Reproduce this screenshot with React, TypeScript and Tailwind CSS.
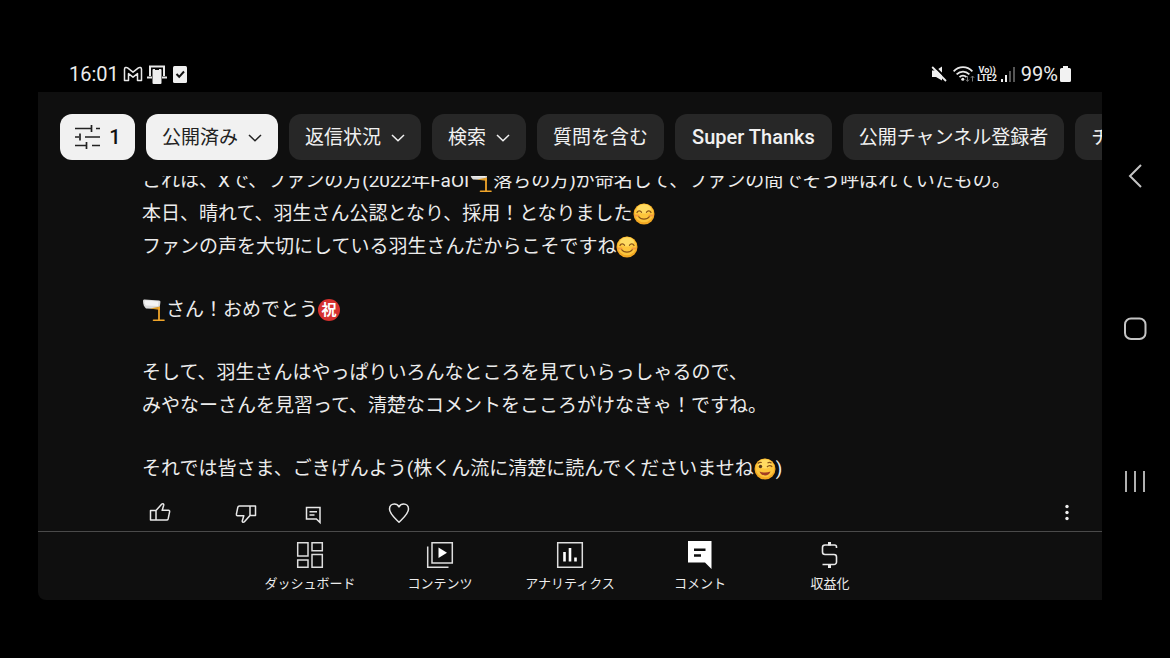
import React, { useState } from 'react'
import clsx from 'clsx'

type IconProps = {
    className?: string,
}

const MailIcon = () => (
    <svg className="h-4 w-5" viewBox="0 0 20 16" fill="none" stroke="#e8e8e8" strokeWidth="1.5" strokeLinejoin="round">
        <path d="M1.5 14.5V3.2C1.5 1.4 3.4 1 4.6 1.9L10 6.2l5.4-4.3c1.2-.9 3.1-.5 3.1 1.3v11.3h-4V7.6L10 11.2 5.5 7.6v6.9z" />
    </svg>
)

const CastIcon = () => (
    <svg className="h-[19px] w-5" viewBox="0 0 20 19" fill="none">
        <path d="M3 11V1.5h14V11" stroke="#e8e8e8" strokeWidth="2" />
        <path d="M0 12.5h5M15 12.5h5" stroke="#e8e8e8" strokeWidth="2" />
        <rect x="5.5" y="4" width="9" height="15" rx="1" fill="#f0f0f0" />
        <path d="M8 4.5h4" stroke="#111" strokeWidth="1" />
    </svg>
)

const TaskIcon = () => (
    <svg className="h-[17px] w-[14px]" viewBox="0 0 14 17" fill="none">
        <rect width="14" height="17" rx="1.5" fill="#efefef" />
        <path d="M3.5 8l2.7 2.8L11 5.5" stroke="#111" strokeWidth="2" />
    </svg>
)

const MuteIcon = () => (
    <svg className="h-4 w-4" viewBox="0 0 16 16" fill="none">
        <path d="M1 4.5h4L11 .5v14L5 11H1z" fill="#efefef" />
        <path d="M2.8 0L16 13" stroke="#000" strokeWidth="2" />
        <path d="M1.200 1L15 15" stroke="#efefef" strokeWidth="1.8" />
    </svg>
)

const WifiIcon = () => (
    <svg className="h-4 w-[22px]" viewBox="0 0 22 16" fill="none" stroke="#e8e8e8" strokeWidth="1.7">
        <path d="M.6 5.4C6-.2 14-.2 19.4 5.4M3.6 8.4c3.8-3.8 9-3.8 12.8 0M6.5 11.2c2-2.1 5-2.1 7 0" />
        <circle cx="9.8" cy="13.3" r="1.5" fill="#e8e8e8" stroke="none" />
        <path d="M14.5 10v5.4m-1.6-1.8l1.6 1.8 1.6-1.8M19.5 15.5V10m-1.6 1.8l1.6-1.8 1.6 1.8" stroke="#777" strokeWidth="1" />
    </svg>
)

const SignalIcon = () => (
    <svg className="h-[15px] w-[14px]" viewBox="0 0 14 15">
        <path d="M0 12h2v3H0zM4 8h2v7H4z" fill="#efefef" />
        <path d="M8 4h2v11H8zM12 0h2v15h-2z" fill="#555" />
    </svg>
)

const BatteryIcon = () => (
    <svg className="h-4 w-[11px]" viewBox="0 0 11 16">
        <path d="M3 0h5v2h1.5A1.5 1.5 0 0111 3.5v11A1.5 1.5 0 019.5 16h-8A1.5 1.5 0 010 14.5v-11A1.5 1.5 0 011.5 2H3z" fill="#f2f2f2" />
    </svg>
)

const TuneIcon = () => (
    <svg className="h-[26px] w-[27px]" viewBox="0 0 27 26" fill="none" stroke="#222" strokeWidth="1.7">
        <path d="M1 4.500h16M17.500 1v7M22 4.500h4M1 13h4M6 9.500v7M11 13h15M1 21.500h11M12.500 18v7M18 21.500h8" />
    </svg>
)

const ChevronIcon = () => (
    <svg className="h-2 w-[14px]" viewBox="0 0 14 8" fill="none" stroke="currentColor" strokeWidth="1.5">
        <path d="M1 1l6 5.800L13 1" />
    </svg>
)

const LikeIcon = ({ className }: IconProps) => (
    <svg className={className} viewBox="0 0 24 24" fill="none" stroke="#e8e8e8" strokeWidth="1.5" strokeLinejoin="round">
        <path d="M2.500 9.500H8v9.500H2.500zM8 9.500L13.800 3c1.200-.8 2.200.2 1.900 1.300L14.200 9.300h6.300c.8 0 1.300.7 1.100 1.500l-1.400 6.900c-.2.800-.9 1.300-1.700 1.300H8z" />
    </svg>
)

const ReplyIcon = () => (
    <svg className="h-6 w-6" viewBox="0 0 24 24" fill="none" stroke="#e8e8e8" strokeWidth="1.5">
        <path d="M5.500 6.500h13.500v15l-3.600-3.500H5.500zM8.500 10.700h7.500M8.500 13.900h5" />
    </svg>
)

const HeartIcon = () => (
    <svg className="h-6 w-6" viewBox="0 0 24 24" fill="none" stroke="#e8e8e8" strokeWidth="1.5" strokeLinejoin="round">
        <path d="M12 21.200C7.500 16.800 2.500 12.800 2.500 8c0-3 2.200-5 4.800-5 2 0 3.700 1 4.700 2.900C13 4 14.700 3 16.700 3c2.600 0 4.800 2 4.800 5 0 4.800-5 8.800-9.500 13.200z" />
    </svg>
)

const MoreIcon = () => (
    <svg className="h-6 w-6" viewBox="0 0 24 24" fill="#efefef">
        <circle cx="12" cy="5.500" r="1.700" />
        <circle cx="12" cy="11.500" r="1.700" />
        <circle cx="12" cy="17.500" r="1.700" />
    </svg>
)

const DashboardIcon = () => (
    <svg className="h-7 w-7" viewBox="0 0 28 28" fill="none" stroke="#dedede" strokeWidth="1.5">
        <path d="M1.700 1.700h10.300v13.300H1.700zM16 1.700h10.300v8H16zM1.700 19h10.300v7.300H1.700zM16 13.500h10.300v12.800H16z" />
    </svg>
)

const ContentIcon = () => (
    <svg className="h-7 w-7" viewBox="0 0 28 28" fill="none" stroke="#dedede" strokeWidth="1.5">
        <path d="M6 1.700h20.300v20.300H6zM1.700 5.500v20.800h20.800" />
        <path d="M12.500 6.500l8.500 5.200-8.500 5.200z" fill="#fff" stroke="none" />
    </svg>
)

const AnalyticsIcon = () => (
    <svg className="h-7 w-7" viewBox="0 0 28 28" fill="none" stroke="#dedede" strokeWidth="1.5">
        <path d="M1.700 1.700h24.600v24.600H1.700z" />
        <path d="M8.500 11v9.500M14 7v13.500M19.500 16.500v4" stroke="#fff" strokeWidth="2.600" />
    </svg>
)

const CommentsIcon = () => (
    <svg className="h-7 w-7" viewBox="0 0 28 28">
        <path d="M2 0H25.500v28l-6.500-6.500H2z" fill="#fff" />
        <path d="M8 8.700h11.500M8 14.500h7" stroke="#0f0f0f" strokeWidth="2.400" />
    </svg>
)

const EarnIcon = () => (
    <svg className="h-7 w-7" viewBox="0 0 28 28" fill="none" stroke="#e8e8e8" strokeWidth="1.600">
        <path d="M20.500 7V6a2 2 0 00-2-2H9A2.500 2.500 0 006.500 6.500V11A2.500 2.500 0 009 13.500h9A2.500 2.500 0 0120.500 16v5a2.500 2.500 0 01-2.500 2.500H6.500" />
        <path d="M13.500 1v3.500M13.500 23.500V27" strokeWidth="3" />
    </svg>
)

const Smile = ({ wink }: { wink?: boolean }) => (
    <svg className="inline-block h-[22px] w-[22px] align-[-5px]" viewBox="0 0 22 22" fill="none" role="img" aria-label={wink ? 'ウインク' : '笑顔'}>
        <circle cx="11" cy="11" r="10.500" fill="#f3a823" />
        <circle cx="11" cy="10" r="9.300" fill="#fdc63c" />
        <ellipse cx="11" cy="6" rx="7" ry="4.500" fill="#ffdb62" />
        {
            wink ?
                <>
                    <circle cx="6.500" cy="8.500" r="1.700" fill="#58371a" />
                    <path d="M3.800 5.500c1-1 2.500-1.400 4-1M13 9c1.500-1.800 3.800-1.800 5.200-.2M13.500 5c1.500-.8 3-.6 4 .3" stroke="#8a5317" strokeWidth="1.200" />
                    <path d="M5.500 13.500c3.300 1.300 7.700 1.300 11 0-1.500 5-9 5.500-11 0z" fill="#a23d22" />
                </>
                :
                <>
                    <path d="M4 9.500c1-2.200 3.500-2.200 4.500-.2M13.500 9.300c1-2 3.500-2 4.500.2M5.500 13.500c2.500 3.600 8.500 3.600 11 0" stroke="#8a5317" strokeWidth="1.300" strokeLinecap="round" />
                    <path d="M2.500 12.500h3M16.500 12.500h3" stroke="#f59a3d" strokeWidth="2" strokeLinecap="round" />
                </>
        }
    </svg>
)

const PouringGlass = () => (
    <svg className="inline-block h-6 w-6 align-[-6px]" viewBox="0 0 24 24" fill="none" role="img" aria-label="注ぐグラス">
        <path d="M2.500 1.500L17 2.500c1 .1 1.500.8 1.400 1.700L17.500 11 4 10.500C2 9 1 6 1 3c0-1 .6-1.500 1.500-1.500z" fill="#dcdcdc" />
        <path d="M3 2.500L16.500 3.500 16 8 4 7.500 2.300 5z" fill="#f4f4f4" />
        <path d="M8 10.500L18 8.500v3.500z" fill="#d99a2b" />
        <path d="M17 9v13" stroke="#f0a52a" strokeWidth="1.800" />
        <path d="M11.500 22.300h10.500" stroke="#f0a52a" strokeWidth="1.600" strokeLinecap="round" />
    </svg>
)

const Congrats = () => (
    <span className="inline-block h-[22px] w-[22px] rounded-full bg-[#d6322f] text-center align-[1px] text-[15px] leading-[22px] font-bold text-white">祝</span>
)

const chips = [
    { label: '公開済み', menu: true },
    { label: '返信状況', menu: true },
    { label: '検索', menu: true },
    { label: '質問を含む' },
    { label: 'Super Thanks' },
    { label: '公開チャンネル登録者' },
    { label: 'チャンネル登録者数' },
]

const tabs = [
    { label: 'ダッシュボード', Icon: DashboardIcon },
    { label: 'コンテンツ', Icon: ContentIcon },
    { label: 'アナリティクス', Icon: AnalyticsIcon },
    { label: 'コメント', Icon: CommentsIcon },
    { label: '収益化', Icon: EarnIcon },
]

const StatusBar = () => (
    <div className="flex h-9 items-center justify-between px-[31px] text-xl leading-none text-[#ececec]">
        <div className="flex items-center gap-1">
            <span>16:01</span>
            <MailIcon />
            <CastIcon />
            <span className="ml-0.5"><TaskIcon /></span>
        </div>
        <div className="flex items-center gap-0.5">
            <MuteIcon />
            <span className="ml-1"><WifiIcon /></span>
            <span className="text-center text-[9px] leading-[8px] font-bold">Vo))<br />LTE2</span>
            <span className="ml-0.5"><SignalIcon /></span>
            <span className="ml-1">99%</span>
            <BatteryIcon />
        </div>
    </div>
)

const FilterBar = () => {
    const [active, setActive] = useState('公開済み')

    return (
        <div className="flex gap-[11px] overflow-hidden pt-[22px] pb-4 pl-[22px] text-[19px]">
            <button className="flex h-[46px] w-[75px] shrink-0 items-center justify-center gap-2 rounded-xl bg-[#f1f1f1] text-xl font-medium text-[#111]" aria-label="フィルタ 1">
                <TuneIcon />
                1
            </button>
            {
                chips.map(({ label, menu }) => (
                    <button
                        key={label}
                        onClick={() => setActive(label)}
                        className={clsx(
                            "flex h-[46px] shrink-0 items-center gap-2.5 rounded-xl whitespace-nowrap",
                            label === active ? "bg-[#f1f1f1] text-[#222]" : "bg-[#272727] text-[#f1f1f1]",
                            label === 'Super Thanks' ? "px-[17px] text-xl font-medium" : "px-4 pt-0.5",
                        )}
                    >
                        {label}
                        {menu && <ChevronIcon />}
                    </button>
                ))
            }
        </div>
    )
}

const Comment = () => (
    <article>
        <div className="overflow-hidden pl-[104px]">
            <div className="-mt-3 flex flex-col gap-[30px] text-[19px] leading-[33px] whitespace-nowrap text-[#ececec]">
                <p>
                    これは、Xで、ファンの方(2022年FaOI<PouringGlass />落ちの方)が命名して、ファンの間でそう呼ばれていたもの。<br />
                    本日、晴れて、羽生さん公認となり、採用！となりました<Smile /><br />
                    ファンの声を大切にしている羽生さんだからこそですね<Smile />
                </p>
                <p><PouringGlass />さん！おめでとう<Congrats /></p>
                <p>
                    そして、羽生さんはやっぱりいろんなところを見ていらっしゃるので、<br />
                    みやなーさんを見習って、清楚なコメントをこころがけなきゃ！ですね。
                </p>
                <p>それでは皆さま、ごきげんよう(株くん流に清楚に読んでくださいませね<Smile wink />)</p>
            </div>
        </div>
        <div className="flex items-center justify-between pt-4 pr-[23px] pb-1.5 pl-[110px]">
            <div className="flex items-center gap-[62px]">
                <button aria-label="高く評価"><LikeIcon className="h-6 w-6" /></button>
                <div className="flex items-center gap-[43px]">
                    <button aria-label="低く評価"><LikeIcon className="h-6 w-6 rotate-180" /></button>
                    <button aria-label="返信"><ReplyIcon /></button>
                </div>
                <button aria-label="ハート"><HeartIcon /></button>
            </div>
            <button aria-label="その他"><MoreIcon /></button>
        </div>
    </article>
)

const TabBar = () => (
    <nav className="flex justify-center border-t border-[#4a4a4a] pt-[9px] pb-1.5 text-[13px] leading-5 text-[#ececec]">
        {
            tabs.map(({ label, Icon }) => (
                <a key={label} href="#" className="flex w-[130px] flex-col items-center gap-[5px]">
                    <Icon />
                    {label}
                </a>
            ))
        }
    </nav>
)

const SystemNav = () => (
    <div className="flex w-[68px] shrink-0 flex-col items-center justify-center gap-[121px]">
        <button aria-label="戻る">
            <svg className="h-8 w-8" viewBox="0 0 32 32" fill="none" stroke="#c4c4c4" strokeWidth="2">
                <path d="M21 5L10 16l11 11" />
            </svg>
        </button>
        <button aria-label="ホーム">
            <svg className="h-8 w-8" viewBox="0 0 32 32" fill="none" stroke="#c4c4c4" strokeWidth="2">
                <rect x="5" y="5.500" width="20.500" height="20.500" rx="6" />
            </svg>
        </button>
        <button aria-label="履歴">
            <svg className="h-8 w-8" viewBox="0 0 32 32" fill="none" stroke="#b0b0b0" strokeWidth="2">
                <path d="M6 5v21M15 5v21M24 5v21" />
            </svg>
        </button>
    </div>
)

const App = () => {
    return (
        <div lang="ja" className="flex min-h-screen bg-black pl-[38px] font-['Roboto','Noto_Sans_CJK_JP',sans-serif]">
            <div className="min-w-0 flex-1 pt-14">
                <StatusBar />
                <main className="overflow-hidden rounded-bl-lg bg-[#0f0f0f]">
                    <FilterBar />
                    <Comment />
                    <TabBar />
                </main>
            </div>
            <SystemNav />
        </div>
    )
}

export default App
